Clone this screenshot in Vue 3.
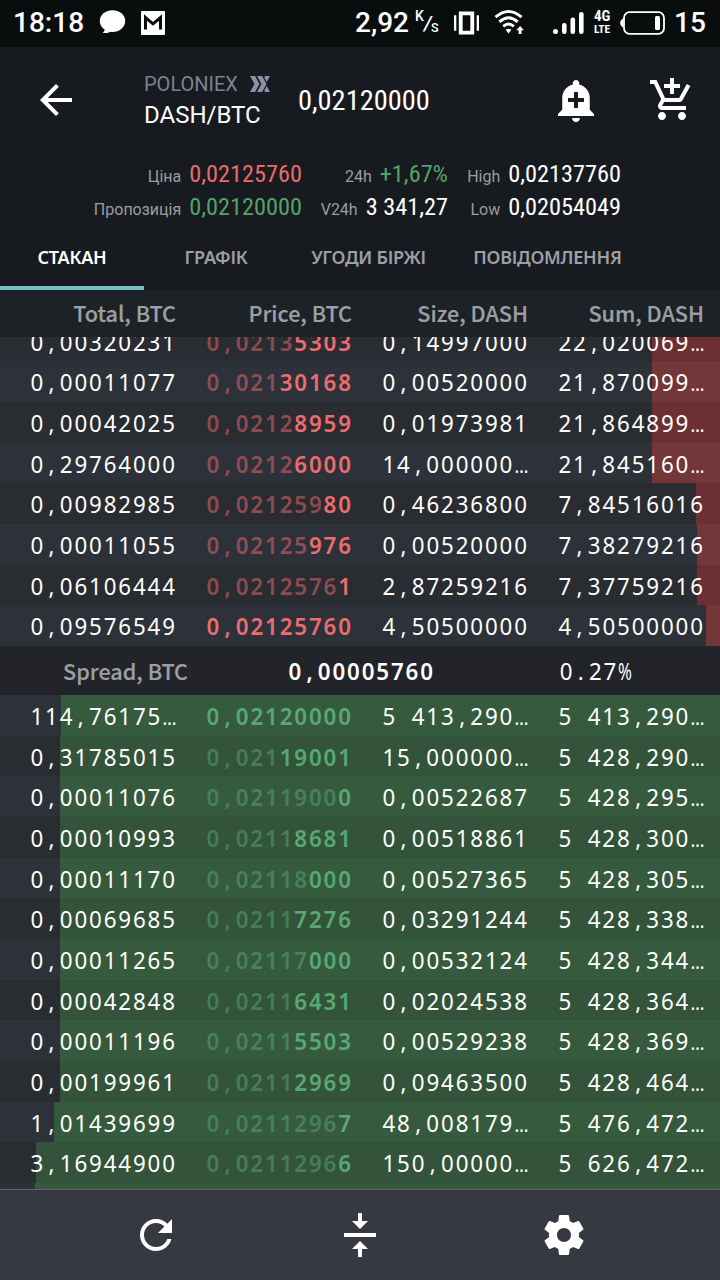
<template>
  <div class="screen">
    <!-- status bar -->
    <div class="status-bar">
      <span class="clock">18:18</span>
      <svg class="icon-chat" viewBox="0 0 28 26">
        <ellipse cx="14" cy="11.5" rx="13.2" ry="11.3" />
        <path d="M6 19c.3 2.200-.8 3.700-2.300 4.700 3 .6 6.300.1 9-1.700z" />
      </svg>
      <svg class="icon-mail" viewBox="0 0 24 24">
        <rect width="24" height="24" rx="1" />
        <path class="mail-m" d="M4.500 18.500V6.500L12 12.800l7.500-6.300v12" />
      </svg>
      <span class="speed">2,92</span>
      <span class="speed-unit"><sup>K</sup><i>/</i><sub>S</sub></span>
      <svg class="icon-vibrate" viewBox="0 0 26 24">
        <path d="M0 4h2.400v16H0zM23.600 4H26v16h-2.400zM5 0h16v24H5zm4 4v16h8V4z" fill-rule="evenodd" />
      </svg>
      <svg class="icon-wifi" viewBox="0 0 32 28">
        <g class="arcs">
          <path d="M1.500 8.500Q15 -3.500 28.500 8.500" />
          <path d="M5.500 13.300Q15 4.800 24.500 13.300" />
          <path d="M9.500 18Q15 13.200 20.500 18" />
        </g>
        <path d="M12 21.500q3-2 6 0l-3 4zM27 17.500l4 4.500h-2.500v4h-3v-4H23z" />
      </svg>
      <svg class="icon-signal" viewBox="0 0 32 24">
        <rect x="0" y="18" width="5" height="5" rx="2.500" />
        <rect x="9" y="12" width="4.600" height="11" rx="2.200" />
        <rect x="17.500" y="6.500" width="4.600" height="16.500" rx="2.200" />
        <rect x="26" y="1" width="4.600" height="22" rx="2.200" />
      </svg>
      <span class="net"><b>4G</b><b>LTE</b></span>
      <svg class="icon-battery" viewBox="0 0 46 24">
        <rect class="shell" x="4" y="1.200" width="40" height="21.600" rx="5.500" />
        <path d="M3 7.500C-.8 9.500-.8 14.500 3 16.500z" />
        <rect x="35" y="5" width="5" height="14" rx="1.500" />
      </svg>
      <span class="battery-level">15</span>
    </div>

    <!-- title bar -->
    <header class="header">
      <div class="title-row">
        <svg class="icon back" viewBox="0 0 24 24"><path :d="icons.back" /></svg>
        <div class="market">
          <div class="exchange">
            <span>POLONIEX</span>
            <svg viewBox="0 0 20 16">
              <path d="M0 0h5l4.500 8L5 16H0l4.500-8zM7 0h5l4.500 8-4.500 8H7l4.500-8zM15 0h5l-3.200 6-2.500-4.400zM16.800 10L20 16h-5l-.7-1.400z" />
            </svg>
          </div>
          <div class="pair">DASH/BTC</div>
        </div>
        <div class="last-price">0,02120000</div>
        <svg class="icon bell" viewBox="0 0 24 24"><path :d="icons.alert" /></svg>
        <svg class="icon cart" viewBox="0 0 24 24"><path :d="icons.cart" /></svg>
      </div>

      <div class="stats">
        <div v-for="s in stats" :key="s.label" class="stat">
          <span class="stat-label">{{ s.label }}</span>
          <span :class="['stat-value', s.tone]">{{ s.value }}</span>
        </div>
      </div>

      <nav class="tabs">
        <div v-for="(tab, i) in tabs" :key="tab" :class="['tab', { active: i === 0 }]">
          <span>{{ tab }}</span>
        </div>
      </nav>
    </header>

    <div class="columns">
      <span v-for="c in columns" :key="c">{{ c }}</span>
    </div>

    <!-- asks, pinned to the spread line -->
    <div class="book asks">
      <div v-for="row in asks" :key="row.price" class="row">
        <div class="depth" :style="{ width: row.depth + 'px' }"></div>
        <span v-for="field in fields" :key="field" :class="['cell', field]">
          <i v-for="(g, k) in split(row, field)" :key="k" :class="g.cls">{{ g.text }}</i>
        </span>
      </div>
    </div>

    <div class="spread">
      <span class="spread-label">Spread, BTC</span>
      <span v-for="field in ['value', 'percent']" :key="field" :class="['cell', field]">
        <i v-for="(g, k) in split(spread, field)" :key="k" :class="g.cls">{{ g.text }}</i>
      </span>
    </div>

    <div class="book bids">
      <div v-for="(row, n) in bids" :key="n" class="row">
        <div class="depth" :style="{ width: row.depth + 'px' }"></div>
        <span v-for="field in fields" :key="field" :class="['cell', field]">
          <i v-for="(g, k) in split(row, field)" :key="k" :class="g.cls">{{ g.text }}</i>
        </span>
      </div>
    </div>

    <footer class="toolbar">
      <div v-for="name in ['refresh', 'center', 'settings']" :key="name" class="tool">
        <svg class="icon" viewBox="0 0 24 24"><path :d="icons[name]" /></svg>
      </div>
    </footer>
  </div>
</template>

<script setup>
const tabs = ['СТАКАН', 'ГРАФІК', 'УГОДИ БІРЖІ', 'ПОВІДОМЛЕННЯ']
const columns = ['Total, BTC', 'Price, BTC', 'Size, DASH', 'Sum, DASH']
const fields = ['total', 'price', 'size', 'sum']

const stats = [
  { label: 'Ціна', value: '0,02125760', tone: 'red' },
  { label: '24h', value: '+1,67%', tone: 'green' },
  { label: 'High', value: '0,02137760', tone: '' },
  { label: 'Пропозиція', value: '0,02120000', tone: 'green' },
  { label: 'V24h', value: '3 341,27', tone: '' },
  { label: 'Low', value: '0,02054049', tone: '' },
]

const spread = { value: '0,00005760', percent: '0.27%' }

// same = number of leading characters shared with the neighbouring price
const order = (total, price, same, size, sum, depth) => ({ total, price, same, size, sum, depth })

const asks = [
  order('0,00320231', '0,02135303', 6, '0,14997000', '22,020069…', 68),
  order('0,00011077', '0,02130168', 5, '0,00520000', '21,870099…', 68),
  order('0,00042025', '0,02128959', 6, '0,01973981', '21,864899…', 68),
  order('0,29764000', '0,02126000', 6, '14,000000…', '21,845160…', 68),
  order('0,00982985', '0,02125980', 8, '0,46236800', '7,84516016', 24),
  order('0,00011055', '0,02125976', 7, '0,00520000', '7,38279216', 23),
  order('0,06106444', '0,02125761', 9, '2,87259216', '7,37759216', 23),
  order('0,09576549', '0,02125760', 0, '4,50500000', '4,50500000', 14),
]

const bids = [
  order('114,76175…', '0,02120000', 0, '5 413,290…', '5 413,290…', 659),
  order('0,31785015', '0,02119001', 5, '15,000000…', '5 428,290…', 660),
  order('0,00011076', '0,02119000', 9, '0,00522687', '5 428,295…', 660),
  order('0,00010993', '0,02118681', 6, '0,00518861', '5 428,300…', 660),
  order('0,00011170', '0,02118000', 7, '0,00527365', '5 428,305…', 660),
  order('0,00069685', '0,02117276', 6, '0,03291244', '5 428,338…', 660),
  order('0,00011265', '0,02117000', 7, '0,00532124', '5 428,344…', 660),
  order('0,00042848', '0,02116431', 6, '0,02024538', '5 428,364…', 660),
  order('0,00011196', '0,02115503', 6, '0,00529238', '5 428,369…', 660),
  order('0,00199961', '0,02112969', 6, '0,09463500', '5 428,464…', 660),
  order('1,01439699', '0,02112967', 9, '48,008179…', '5 476,472…', 666),
  order('3,16944900', '0,02112966', 9, '150,00000…', '5 626,472…', 684),
  order('', '', 0, '', '', 685),
]

// Digits stay together, every other character gets its own fixed-width box
const split = (row, field) => {
  const same = field === 'price' ? row.same : 0
  const parts = []
  const add = (chunk, dim) => {
    for (const text of chunk.match(/\d+|\D/g) || []) {
      parts.push({ text, cls: { dim, box: /\D/.test(text), dots: text === '…', pct: text === '%' } })
    }
  }
  add(row[field].slice(0, same), true)
  add(row[field].slice(same), false)
  return parts
}

const icons = {
  back: 'M20 11H7.830l5.590-5.590L12 4l-8 8 8 8 1.410-1.410L7.830 13H20v-2z',
  alert: 'M10.010 21.010c0 1.100.890 1.990 1.990 1.990s1.990-.890 1.990-1.990h-3.980zm8.870-4.190V11c0-3.250-2.250-5.970-5.290-6.690v-.720C13.590 2.710 12.880 2 12 2s-1.590.710-1.590 1.590v.720C7.370 5.030 5.120 7.750 5.120 11v5.820L3 18.940V20h18v-1.060l-2.120-2.120zM16 13.010h-3v3h-2v-3H8V11h3V8h2v3h3v2.010z',
  cart: 'M11 9h2V6h3V4h-3V1h-2v3H8v2h3v3zm-4 9c-1.100 0-1.990.9-1.990 2S5.900 22 7 22s2-.9 2-2-.9-2-2-2zm10 0c-1.100 0-1.990.9-1.990 2s.890 2 1.990 2 2-.9 2-2-.9-2-2-2zm-9.830-3.250l.030-.120.9-1.630h7.450c.750 0 1.410-.410 1.750-1.030l3.860-7.010L19.420 4h-.010l-1.100 2-2.760 5H8.530l-.130-.270L6.160 6l-.950-2-.940-2H1v2h2l3.600 7.590-1.350 2.450c-.160.280-.250.610-.250.960 0 1.100.9 2 2 2h12v-2H7.420c-.130 0-.250-.110-.250-.250z',
  refresh: 'M17.650 6.350C16.200 4.900 14.210 4 12 4c-4.420 0-7.990 3.580-7.990 8s3.570 8 7.990 8c3.730 0 6.840-2.550 7.730-6h-2.080c-.820 2.330-3.040 4-5.650 4-3.310 0-6-2.690-6-6s2.690-6 6-6c1.660 0 3.140.690 4.220 1.780L13 11h7V4l-2.350 2.350z',
  center: 'M8 19h3v4h2v-4h3l-4-4-4 4zm8-14h-3V1h-2v4H8l4 4 4-4zM4 11v2h16v-2H4z',
  settings: 'M19.430 12.980c.040-.320.070-.640.070-.980s-.030-.660-.070-.980l2.110-1.650c.190-.150.240-.420.120-.640l-2-3.460c-.120-.220-.390-.3-.610-.220l-2.490 1c-.520-.4-1.080-.730-1.690-.980l-.380-2.650C14.460 2.180 14.250 2 14 2h-4c-.250 0-.460.180-.490.420l-.380 2.650c-.610.250-1.170.590-1.690.980l-2.490-1c-.230-.090-.490 0-.610.220l-2 3.460c-.130.220-.070.490.120.640l2.110 1.650c-.040.320-.070.650-.070.980s.030.660.070.980l-2.110 1.650c-.190.150-.240.420-.120.640l2 3.460c.120.220.390.3.610.220l2.490-1c.520.4 1.080.730 1.690.980l.380 2.650c.030.240.240.420.490.420h4c.250 0 .460-.180.490-.420l.380-2.650c.610-.250 1.170-.590 1.690-.980l2.490 1c.230.090.490 0 .610-.220l2-3.460c.120-.220.070-.490-.120-.640l-2.110-1.650zM12 15.500c-1.930 0-3.500-1.570-3.500-3.500s1.570-3.500 3.500-3.500 3.500 1.570 3.500 3.500-1.570 3.500-3.500 3.500z',
}
</script>

<style>
body {
  margin: 0;
  background: #171b1f;
}
</style>

<style scoped>
.screen {
  display: flex;
  flex-direction: column;
  width: 720px;
  height: 1280px;
  overflow: hidden;
  color: #fff;
  background: #171b1f;
  font-family: Roboto, 'Noto Sans', sans-serif;
}

svg {
  flex: none;
  fill: #fff;
}

/* status bar */
.status-bar {
  display: flex;
  align-items: center;
  box-sizing: border-box;
  height: 47px;
  padding: 0 13px 2px;
  background: #090d0e;
  font-size: 28px;
  font-weight: 500;
}

.clock {
  width: 86px;
}

.icon-chat {
  width: 27px;
  height: 25px;
}

.icon-mail {
  width: 24px;
  height: 24px;
  margin-left: 15px;
}

.mail-m {
  fill: none;
  stroke: #090d0e;
  stroke-width: 3;
}

.speed {
  width: 60px;
  margin-left: 190px;
}

.speed-unit {
  display: flex;
  width: 25px;
  height: 25px;
  font-size: 15px;
  line-height: 15px;
}

.speed-unit sup {
  width: 9px;
  font-size: 14px;
  line-height: 12px;
}

.speed-unit i {
  width: 7px;
  font-size: 20px;
  line-height: 26px;
}

.speed-unit sub {
  align-self: flex-end;
}

.icon-vibrate {
  width: 25px;
  height: 24px;
  margin-left: 14px;
}

.icon-wifi {
  width: 31px;
  height: 27px;
  margin-left: 15px;
}

.arcs {
  fill: none;
  stroke: #fff;
  stroke-width: 3;
}

.icon-signal {
  width: 32px;
  height: 24px;
  margin-left: 28px;
}

.net {
  display: flex;
  flex-direction: column;
  width: 17px;
  margin-left: 9px;
  font-size: 15px;
  font-stretch: 80%;
  line-height: 13px;
}

.net b:last-child {
  font-size: 11.5px;
}

.icon-battery {
  width: 46px;
  height: 24px;
  margin-left: 9px;
}

.shell {
  fill: none;
  stroke: #fff;
  stroke-width: 1.8;
}

.battery-level {
  margin-left: 8px;
}

/* header */
.header {
  height: 243px;
}

.title-row {
  display: flex;
  align-items: center;
  height: 106px;
  padding-left: 32px;
}

.icon {
  width: 48px;
  height: 48px;
}

.market {
  width: 154px;
  margin-left: 64px;
}

.exchange {
  display: flex;
  align-items: center;
  gap: 12px;
  color: #7b8296;
  font-size: 20px;
  line-height: 28px;
}

.exchange svg {
  width: 20px;
  height: 16px;
  fill: #8b92a6;
}

.pair {
  padding-top: 1px;
  font-size: 24px;
  line-height: 32px;
}

.last-price {
  width: 254px;
  padding-top: 1px;
  font-size: 28.4px;
  font-stretch: 75%;
}

.cart {
  margin-left: 48px;
}

.stats {
  display: grid;
  grid-template-columns: 302px 146px 173px;
  grid-auto-rows: 33px;
  padding-top: 6px;
}

.stat {
  display: flex;
  align-items: baseline;
  justify-content: flex-end;
  gap: 8px;
}

.stat-label {
  color: #9a9da2;
  font-size: 16px;
}

.stat-value {
  font-size: 24.3px;
  font-stretch: 75%;
}

.red {
  color: #e86a6d;
}

.green {
  color: #52a368;
}

.tabs {
  display: grid;
  grid-template-columns: 144px 144px 161px 197px;
  height: 65px;
}

.tab {
  display: flex;
  align-items: center;
  justify-content: center;
  box-sizing: border-box;
  padding-top: 2px;
  border-bottom: 4px solid transparent;
  color: #9c9fa6;
  font-family: 'Noto Sans', sans-serif;
  font-size: 18px;
  font-weight: 600;
  letter-spacing: -0.25px;
  white-space: nowrap;
}

.tab.active {
  border-color: #78bfc3;
  color: #fff;
}

/* order book */
.columns {
  display: grid;
  flex: none;
  grid-template-columns: repeat(4, 176px);
  height: 47px;
  background: #1c2225;
  line-height: 45px;
  text-align: right;
}

.columns,
.spread-label {
  color: #9d9fa4;
  font-family: 'Noto Sans CJK JP', sans-serif;
  font-size: 21.6px;
  font-weight: 500;
  -webkit-text-stroke: 0.2px #9d9fa4;
}

.book {
  display: flex;
  flex: none;
  flex-direction: column;
  overflow: hidden;
}

.asks {
  justify-content: flex-end;
  height: 309px;
}

.bids {
  height: 494px;
}

.row {
  position: relative;
  display: grid;
  flex: none;
  grid-template-columns: repeat(4, 176px);
  height: 40.68px;
  background: #292c31;
}

.asks .row:nth-child(even),
.bids .row:nth-child(odd) {
  background: #2d3139;
}

.depth {
  position: absolute;
  top: 0;
  right: 0;
  bottom: 0;
  background: #6c3034;
}

.asks .row:nth-child(even) .depth {
  background: #733639;
}

.bids .depth {
  background: #33533a;
}

.bids .row:nth-child(odd) .depth {
  background: #365a3e;
}

/* digits are narrowed a little and spaced out to a monospaced pitch */
.cell {
  position: relative;
  font-family: 'Noto Sans', sans-serif;
  font-size: 24px;
  letter-spacing: 2.02px;
  line-height: 41px;
  text-align: right;
  white-space: pre;
  transform: translateX(0.9px) scaleX(0.93);
  transform-origin: right;
}

.cell i {
  font-style: normal;
}

.cell .box {
  display: inline-block;
  box-sizing: border-box;
  width: 15.75px;
  padding-right: 1.8px;
  letter-spacing: 0;
  line-height: 20px;
  text-align: center;
}

.cell .dots {
  padding-right: 0;
  font-size: 19px;
}

.cell .pct {
  transform: scaleX(0.75);
  transform-origin: left;
}

.price {
  color: #ee6b6e;
  font-weight: 600;
}

.bids .price {
  color: #58a972;
}

.dim {
  opacity: 0.5;
}

.spread {
  display: grid;
  flex: none;
  grid-template-columns: 188px 246px 198px;
  height: 49px;
  background: #222429;
}

.spread-label {
  line-height: 49px;
  text-align: right;
}

.spread .cell {
  line-height: 50px;
}

.value {
  font-weight: 600;
}

/* bottom toolbar */
.toolbar {
  display: flex;
  flex: none;
  box-sizing: border-box;
  height: 91px;
  padding: 0 54px;
  border-top: 1px solid #62666b;
  background: #373942;
}

.tool {
  display: flex;
  align-items: center;
  justify-content: center;
  width: 204px;
}
</style>
